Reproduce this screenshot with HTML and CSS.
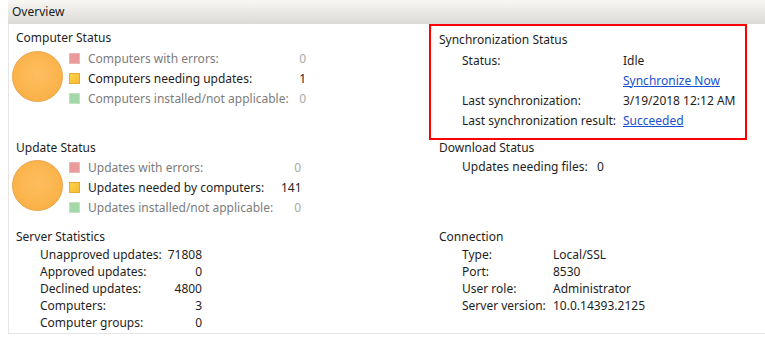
FILE: index.html
```html
<!DOCTYPE html>
<html>
<head>
<meta charset="utf-8">
<link rel="stylesheet" href="styles.css">
</head>
<body>
<div class="header">Overview</div>
<div class="panel">
  <div class="grid">
    <section class="sec sec-comp">
      <div class="title">Computer Status</div>
      <div class="chart">
        <div class="pie"></div>
        <div class="legend">
          <div class="lrow dim"><span class="sq sq-red"></span><span class="lbl w-comp">Computers with errors:</span><span class="val v-comp faint">0</span></div>
          <div class="lrow"><span class="sq sq-yel"></span><span class="lbl w-comp">Computers needing updates:</span><span class="val v-comp">1</span></div>
          <div class="lrow dim"><span class="sq sq-grn"></span><span class="lbl w-comp">Computers installed/not applicable:</span><span class="val v-comp faint">0</span></div>
        </div>
      </div>
    </section>
    <section class="sec sec-sync">
      <div class="redbox">
        <div class="title">Synchronization Status</div>
        <div class="kv kv-sync">
          <span>Status:</span><span>Idle</span>
          <span></span><span><a href="#" class="link">Synchronize Now</a></span>
          <span>Last synchronization:</span><span>3/19/2018 12:12 AM</span>
          <span>Last synchronization result:</span><span><a href="#" class="link">Succeeded</a></span>
        </div>
      </div>
    </section>

    <section class="sec sec-upd">
      <div class="title t2">Update Status</div>
      <div class="chart chart2">
        <div class="pie"></div>
        <div class="legend">
          <div class="lrow dim"><span class="sq sq-red"></span><span class="lbl w-upd">Updates with errors:</span><span class="val v-upd faint">0</span></div>
          <div class="lrow"><span class="sq sq-yel"></span><span class="lbl w-upd">Updates needed by computers:</span><span class="val v-upd">141</span></div>
          <div class="lrow dim"><span class="sq sq-grn"></span><span class="lbl w-upd">Updates installed/not applicable:</span><span class="val v-upd faint">0</span></div>
        </div>
      </div>
    </section>
    <section class="sec sec-dl">
      <div class="title t2">Download Status</div>
      <div class="kv kv-dl">
        <span>Updates needing files:</span><span>0</span>
      </div>
    </section>

    <section class="sec sec-srv">
      <div class="title t3">Server Statistics</div>
      <div class="kv kv-srv">
        <span>Unapproved updates:</span><span>71808</span>
        <span>Approved updates:</span><span>0</span>
        <span>Declined updates:</span><span>4800</span>
        <span>Computers:</span><span>3</span>
        <span>Computer groups:</span><span>0</span>
      </div>
    </section>
    <section class="sec sec-conn">
      <div class="title t3">Connection</div>
      <div class="kv kv-conn">
        <span>Type:</span><span>Local/SSL</span>
        <span>Port:</span><span>8530</span>
        <span>User role:</span><span>Administrator</span>
        <span>Server version:</span><span>10.0.14393.2125</span>
      </div>
    </section>
  </div>
</div>
</body>
</html>
```
FILE: styles.css
```css
html, body {
  margin: 0;
  padding: 0;
  background: #ffffff;
}
body {
  font-family: "Noto Sans", "Open Sans", sans-serif;
  font-size: 12px;
  color: #1e1e1e;
  width: 765px;
  height: 356px;
  overflow: hidden;
}
.header {
  margin-left: 8px;
  height: 24px;
  line-height: 24px;
  padding-left: 4px;
  background: linear-gradient(#f9f7f4, #dcdad7);
  color: #1a1a1a;
}
.panel {
  margin-left: 8px;
  height: 309px;
  border-left: 1px solid #e6e6e6;
  border-bottom: 1px solid #e6e6e6;
}
.grid {
  display: grid;
  grid-template-columns: 420px 318px;
  grid-template-rows: 116px 88px 1fr;
}
.title {
  line-height: 20px;
}
.sec-comp, .sec-upd, .sec-srv {
  padding-left: 7px;
}
.sec-comp { padding-top: 4px; }
.sec-dl, .sec-conn { padding-left: 10px; }
.t2 { line-height: 16px; }
.t3 { line-height: 18px; }

.chart {
  display: flex;
  align-items: flex-start;
  margin-left: -4px;
}
.chart2 { margin-top: 1px; }
.pie {
  width: 49px;
  height: 49px;
  border-radius: 50%;
  background: radial-gradient(circle at 50% 45%, #fdbe5e 0%, #fbb44c 60%, #f6a83c 100%);
  border: 1px solid #eaa348;
  margin-top: 3px;
  flex: none;
}
.legend {
  margin-left: 6px;
}
.lrow {
  display: flex;
  align-items: center;
  height: 20px;
}
.sq {
  width: 11px;
  height: 11px;
  margin-right: 8px;
  flex: none;
  box-sizing: border-box;
}
.sq-red { background: #e99a9a; border: 1px solid #f0b6b6; }
.sq-yel { background: linear-gradient(135deg, #fcd34a, #f6bb33); border: 1px solid #e9a92c; }
.sq-grn { background: #a5d8a8; border: 1px solid #bfe3c1; }
.dim .lbl { color: #7c7c7c; }
.faint { color: #a9a9a9; }
.w-comp { width: 207px; }
.v-comp { width: 11px; text-align: right; }
.w-upd { width: 193px; }
.v-upd { width: 20px; text-align: right; }

.redbox {
  margin-left: 0;
  height: 116px;
  box-sizing: border-box;
  border: 2px solid #ff0000;
  padding: 4px 0 0 8px;
}
.kv {
  display: grid;
  padding-left: 23px;
}
.kv-sync {
  grid-template-columns: 161px auto;
  grid-auto-rows: 20px;
  align-items: center;
}
.kv-dl {
  grid-template-columns: 135px auto;
  grid-auto-rows: 20px;
  align-items: center;
}
.kv-srv {
  grid-template-columns: 126px 36px;
  grid-auto-rows: 17px;
  align-items: center;
  padding-left: 24px;
}
.kv-srv span:nth-child(2n) { text-align: right; }
.kv-conn {
  grid-template-columns: 91px auto;
  grid-auto-rows: 17px;
  align-items: center;
}
.link {
  color: #1a4fd0;
  text-decoration: underline;
}
```
